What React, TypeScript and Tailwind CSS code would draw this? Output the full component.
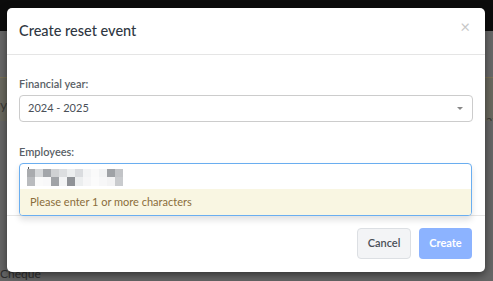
import React from "react";

const row1 = ["#a9abae", "#d6d8da", "#a3a6aa", "#cfd1d3", "#dcdee0", "#eceeef", "#dadcdf", "#f3f4f5", "#fafafa", "#f2f3f4", "#9fa2a6", "#c2c4c7"];
const row2 = ["#b9bbbe", "#fafafa", "#f8f8f9", "#a0a3a7", "#f3f4f5", "#8f9297", "#eceeef", "#f6f6f7", "#fbfbfb", "#f7f7f8", "#f3f3f4", "#c9cbce"];

function Pixels() {
  return (
    <div className="flex flex-col">
      <div className="flex">
        {row1.map((c, i) => (
          <div key={i} className="w-[8px] h-[8px]" style={{ backgroundColor: c }} />
        ))}
      </div>
      <div className="flex">
        {row2.map((c, i) => (
          <div key={i} className="w-[8px] h-[9px]" style={{ backgroundColor: c }} />
        ))}
      </div>
    </div>
  );
}

export default function App() {
  return (
    <div className="relative w-[493px] h-[281px] overflow-hidden bg-[#666666]" style={{ fontFamily: "Lato, 'Open Sans', sans-serif" }}>
      {/* backdrop page */}
      <div className="flex flex-col w-full h-full">
        <div className="h-[31px] bg-[#0c0c0c]" />
        <div className="h-[46px] bg-[#686868]" />
        <div className="h-[1px] bg-[#7a7256]" />
        <div className="h-[43px] bg-[#6a695f] relative">
          <span className="absolute left-[0px] top-[16px] text-[14px] text-[#3b3b38]">y</span>
          <span className="absolute left-[0px] top-[35px] text-[14px] text-[#3b3b38]">e</span>
          <span className="absolute left-[486px] top-[33px] text-[13px] text-[#3b3b38]">ata</span>
        </div>
        <div className="flex-1 bg-[#666666] relative">
          <span className="absolute left-[0px] top-[147px] text-[12px] text-[#2e2e2e] leading-none">Cheque</span>
        </div>
      </div>

      {/* modal */}
      <div className="absolute left-[7px] top-[8px] w-[478px] h-[264px] bg-white rounded-[5px] shadow-[0_3px_9px_rgba(0,0,0,0.5)] flex flex-col">
        <div className="h-[46px] border-b border-[#e5e5e5] flex items-center justify-between pl-[12px] pr-[15px] box-content">
          <span className="text-[14.5px] font-medium text-[#2f3742]">Create reset event</span>
          <span className="text-[17px] leading-none text-[#c8c8c8] -mt-[9px]">×</span>
        </div>
        <div className="flex flex-col px-[12px] pt-[20px] pb-[26px] relative">
          <div className="h-[17px] leading-[17px] text-[11px] font-semibold text-[#5a5f66]">Financial year:</div>
          <div className="mt-[3px] h-[27px] border border-[#cccccc] rounded-[4px] flex items-center justify-between pl-[8px] pr-[9px]">
            <span className="text-[11px] text-[#4a5058]">2024 - 2025</span>
            <span className="w-0 h-0 border-l-[3px] border-r-[3px] border-t-[3px] border-l-transparent border-r-transparent border-t-[#888888]" />
          </div>
          <div className="mt-[21px] h-[17px] leading-[17px] text-[11px] font-semibold text-[#5a5f66]">Employees:</div>
          <div className="mt-[3px] h-[26px] relative">
            <div className="absolute left-0 top-0 w-[453px] h-[53px] border border-[#6aaef0] rounded-[4px] bg-white flex flex-col z-10 shadow-[0_4px_6px_rgba(0,0,0,0.12)] overflow-hidden">
              <div className="h-[25px] flex items-center pl-[7px] pt-[1px]">
                <div className="relative">
                  <div className="absolute left-[1px] -top-[2px] w-[1px] h-[2px] bg-[#555]" />
                  <Pixels />
                </div>
              </div>
              <div className="flex-1 bg-[#f9f6e2] flex items-center pl-[10px]">
                <span className="text-[11px] text-[#8a6d3b]">Please enter 1 or more characters</span>
              </div>
            </div>
          </div>
        </div>
        <div className="border-t border-[#e5e5e5] flex justify-end gap-[8px] pt-[12px] pb-[13px] pr-[13px]">
          <button className="w-[54px] h-[31px] bg-[#f3f4f6] border border-[#dcdfe3] rounded-[4px] text-[11px] font-semibold text-[#4a4f56]">Cancel</button>
          <button className="w-[53px] h-[31px] bg-[#8cb3ff] rounded-[4px] text-[11px] font-bold text-white">Create</button>
        </div>
      </div>
    </div>
  );
}
